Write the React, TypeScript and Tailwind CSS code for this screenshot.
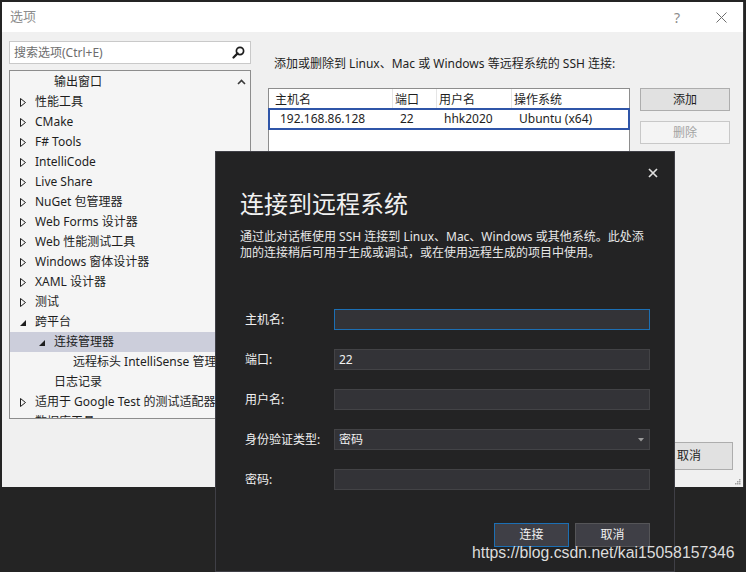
import React from "react";

const sans = "font-['Noto_Sans','Noto_Sans_CJK_SC',sans-serif]";

type TreeNode = {
  label: string;
  level: 0 | 1 | 2;
  arrow?: "closed" | "open";
  selected?: boolean;
};

const treeItems: TreeNode[] = [
  { label: "输出窗口", level: 1 },
  { label: "性能工具", level: 0, arrow: "closed" },
  { label: "CMake", level: 0, arrow: "closed" },
  { label: "F# Tools", level: 0, arrow: "closed" },
  { label: "IntelliCode", level: 0, arrow: "closed" },
  { label: "Live Share", level: 0, arrow: "closed" },
  { label: "NuGet 包管理器", level: 0, arrow: "closed" },
  { label: "Web Forms 设计器", level: 0, arrow: "closed" },
  { label: "Web 性能测试工具", level: 0, arrow: "closed" },
  { label: "Windows 窗体设计器", level: 0, arrow: "closed" },
  { label: "XAML 设计器", level: 0, arrow: "closed" },
  { label: "测试", level: 0, arrow: "closed" },
  { label: "跨平台", level: 0, arrow: "open" },
  { label: "连接管理器", level: 1, arrow: "open", selected: true },
  { label: "远程标头 IntelliSense 管理器", level: 2 },
  { label: "日志记录", level: 1 },
  { label: "适用于 Google Test 的测试适配器", level: 0, arrow: "closed" },
  { label: "数据库工具", level: 0, arrow: "closed" },
];

const indent = ["pl-[9px]", "pl-[28px]", "pl-[47px]"];

const formRows = [
  { label: "主机名:", value: "", focused: true },
  { label: "端口:", value: "22" },
  { label: "用户名:", value: "" },
  { label: "身份验证类型:", value: "密码", combo: true },
  { label: "密码:", value: "" },
];

function ClosedArrow() {
  return (
    <svg width="7" height="9" viewBox="0 0 7 9" className="ml-[1px]">
      <path d="M0.5 0.5 L5.5 4.5 L0.5 8.5 Z" fill="none" stroke="#1e1e1e" strokeWidth="1" />
    </svg>
  );
}

function OpenArrow() {
  return (
    <svg width="6" height="6" viewBox="0 0 6 6" className="ml-[1px] mt-[2px]">
      <path d="M6 0 L6 6 L0 6 Z" fill="#1e1e1e" />
    </svg>
  );
}

function TreeRow({ node }: { node: TreeNode }) {
  return (
    <div
      className={`flex h-[20px] shrink-0 items-center whitespace-nowrap ${indent[node.level]} ${
        node.selected ? "bg-[#cccedb]" : ""
      }`}
    >
      <span className="flex w-[16px] shrink-0 items-center">
        {node.arrow === "closed" && <ClosedArrow />}
        {node.arrow === "open" && <OpenArrow />}
      </span>
      <span>{node.label}</span>
    </div>
  );
}

function OptionsWindow() {
  return (
    <div className="relative flex h-[485px] w-[742px] flex-col border-r border-[#3c3c3c] bg-[#f0f0f0] text-[#1e1e1e]">
      {/* title bar */}
      <div className="flex h-[30px] shrink-0 items-center bg-white pl-[8px] pr-[16px]">
        <span className="text-[13px] text-[#8c8c8c]">选项</span>
        <span className="ml-auto mr-[36px] text-[14px] text-[#8c8c8c]">?</span>
        <svg width="11" height="11" viewBox="0 0 11 11">
          <path d="M0.5 0.5 L10.5 10.5 M10.5 0.5 L0.5 10.5" stroke="#6e6e6e" strokeWidth="1" />
        </svg>
      </div>

      <div className="flex h-[387px] shrink-0">
        {/* left column */}
        <div className="ml-[7px] flex w-[242px] flex-col pt-[9px]">
          <div className="flex h-[23px] items-center border border-[#c9c9c9] bg-white pl-[4px] pr-[5px]">
            <span className="text-[#6d6d6d]">搜索选项(Ctrl+E)</span>
            <svg width="13" height="13" viewBox="0 0 13 13" className="ml-auto">
              <circle cx="8" cy="5" r="3.6" fill="none" stroke="#1e1e1e" strokeWidth="1.7" />
              <path d="M5.6 7.4 L1.5 11.5" stroke="#1e1e1e" strokeWidth="2.2" strokeLinecap="round" />
            </svg>
          </div>
          <div className="mt-[6px] flex h-[349px] overflow-hidden border border-[#8d8d8d] bg-[#f5f5f5]">
            <div className="flex min-w-0 flex-1 flex-col overflow-hidden pt-[1px]">
              {treeItems.map((n) => (
                <TreeRow key={n.label} node={n} />
              ))}
            </div>
            <div className="flex w-[18px] shrink-0 justify-center pt-[8px]">
              <svg width="9" height="6" viewBox="0 0 9 6">
                <path d="M1 5 L4.5 1.5 L8 5" fill="none" stroke="#3a3a3a" strokeWidth="1.6" />
              </svg>
            </div>
          </div>
        </div>

        {/* right column */}
        <div className="ml-[17px] flex flex-col pt-[24px]">
          <div className="pl-[6px] leading-[16px]">
            添加或删除到 Linux、Mac 或 Windows 等远程系统的 SSH 连接:
          </div>
          <div className="mt-[16px] flex">
            <div className="flex h-[200px] w-[362px] flex-col border border-[#8d8d8d] bg-white">
              <div className="flex h-[19px] items-center">
                <div className="h-full w-[124px] border-r border-[#e5e5e5] pl-[6px] pt-[1px] leading-[19px]">主机名</div>
                <div className="h-full w-[44px] border-r border-[#e5e5e5] pl-[2px] pt-[1px] leading-[19px]">端口</div>
                <div className="h-full w-[75px] border-r border-[#e5e5e5] pl-[2px] pt-[1px] leading-[19px]">用户名</div>
                <div className="h-full flex-1 pl-[2px] pt-[1px] leading-[19px]">操作系统</div>
              </div>
              <div className="-mx-[1px] flex h-[22px] items-center border-2 border-[#2f55a8]">
                <div className="w-[124px] pl-[10px]">192.168.86.128</div>
                <div className="w-[44px] pl-[6px]">22</div>
                <div className="w-[75px] pl-[6px]">hhk2020</div>
                <div className="flex-1 pl-[6px]">Ubuntu (x64)</div>
              </div>
            </div>
            <div className="ml-[10px] flex flex-col gap-[10px]">
              <div className="flex h-[23px] w-[90px] items-center justify-center border border-[#adadad] bg-[#e1e1e1]">
                添加
              </div>
              <div className="flex h-[23px] w-[90px] items-center justify-center border border-[#c8c8c8] bg-[#f4f4f4] text-[#a3a3a3]">
                删除
              </div>
            </div>
          </div>
        </div>
      </div>

      {/* bottom buttons (mostly behind the dialog) */}
      <div className="flex justify-end gap-[6px] pr-[10px] pt-[23px]">
        <div className="flex h-[28px] w-[88px] items-center justify-center border border-[#adadad] bg-[#e1e1e1]">
          确定
        </div>
        <div className="flex h-[28px] w-[88px] items-center justify-center border border-[#adadad] bg-[#e1e1e1]">
          取消
        </div>
      </div>

      <svg width="7" height="7" viewBox="0 0 7 7" className="absolute bottom-[2px] right-[2px]">
        <rect x="5" y="1" width="1.5" height="1.5" fill="#a0a0a0" />
        <rect x="3" y="3" width="1.5" height="1.5" fill="#a0a0a0" />
        <rect x="5" y="3" width="1.5" height="1.5" fill="#a0a0a0" />
        <rect x="1" y="5" width="1.5" height="1.5" fill="#a0a0a0" />
        <rect x="3" y="5" width="1.5" height="1.5" fill="#a0a0a0" />
        <rect x="5" y="5" width="1.5" height="1.5" fill="#a0a0a0" />
      </svg>
    </div>
  );
}

function ConnectDialog() {
  return (
    <div className="absolute left-[215px] top-[151px] flex h-[421px] w-[460px] flex-col border border-[#3f3f46] bg-[#232324] text-[#f1f1f1]">
      <div className="flex justify-end pr-[16px] pt-[16px]">
        <svg width="10" height="10" viewBox="0 0 10 10">
          <path d="M1 1 L9 9 M9 1 L1 9" stroke="#e0e0e0" strokeWidth="1.7" />
        </svg>
      </div>
      <div className="mt-[10px] pl-[24px] text-[24px] leading-[32px]">连接到远程系统</div>
      <div className="mt-[9px] whitespace-nowrap pl-[24px] text-[12px] leading-[16px] text-[#e8e8e8]">
        通过此对话框使用 SSH 连接到 Linux、Mac、Windows 或其他系统。此处添
        <br />
        加的连接稍后可用于生成或调试，或在使用远程生成的项目中使用。
      </div>
      <div className="mt-[48px] flex flex-col gap-[19px] pl-[29px]">
        {formRows.map((r) => (
          <div key={r.label} className="flex h-[21px] items-center">
            <div className="w-[89px] shrink-0">{r.label}</div>
            <div
              className={`flex h-[21px] w-[316px] items-center border bg-[#333337] pl-[4px] pr-[5px] ${
                r.focused ? "border-[#1c6fb4]" : "border-[#434346]"
              }`}
            >
              <span>{r.value}</span>
              {r.combo && (
                <svg width="6" height="4" viewBox="0 0 6 4" className="ml-auto">
                  <path d="M0 0 L6 0 L3 3.5 Z" fill="#9a9a9a" />
                </svg>
              )}
            </div>
          </div>
        ))}
      </div>
      <div className="mt-[33px] flex justify-end gap-[6px] pr-[24px]">
        <div className="flex h-[24px] w-[75px] items-center justify-center border border-[#1c6fb4] bg-[#3f3f46]">
          连接
        </div>
        <div className="flex h-[24px] w-[75px] items-center justify-center border border-[#555558] bg-[#3f3f46]">
          取消
        </div>
      </div>
    </div>
  );
}

export default function App() {
  return (
    <div className={`relative h-[572px] w-[746px] overflow-hidden bg-[#242424] pl-[2px] pt-[2px] text-[12px] ${sans}`}>
      <OptionsWindow />
      <ConnectDialog />
      <div className="absolute left-[472px] top-[544px] whitespace-nowrap font-['Liberation_Sans',sans-serif] text-[15.8px] leading-[18px] text-[#dcdcdc]">
        https://blog.csdn.net/kai15058157346
      </div>
    </div>
  );
}
